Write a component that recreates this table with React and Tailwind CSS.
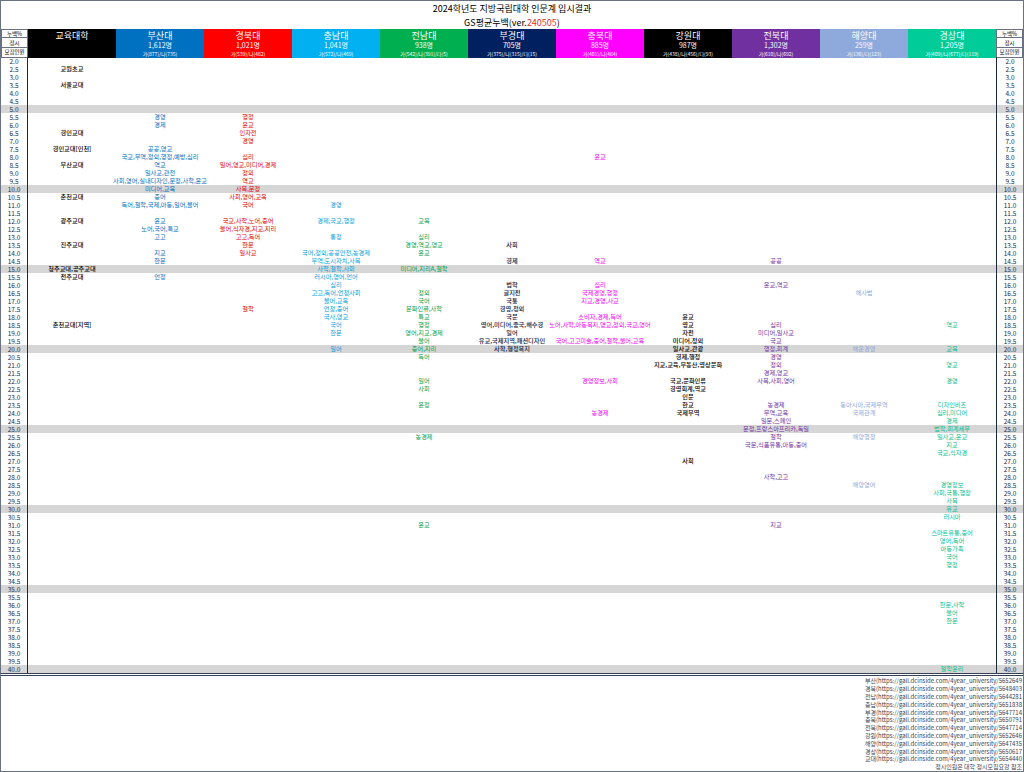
import React from 'react';

const cols = [
    { key: 'edu', name: '교육대학', count: '', sub: '', bg: 'bg-black', fg: 'text-black font-medium' },
    { key: 'pusan', name: '부산대', count: '1,612명', sub: '가(877)/나(735)', bg: 'bg-[#0070c0]', fg: 'text-[#0070c0]' },
    { key: 'knu', name: '경북대', count: '1,021명', sub: '가(539)/나(482)', bg: 'bg-[#ff0000]', fg: 'text-[#e00000]' },
    { key: 'cnu', name: '충남대', count: '1,041명', sub: '가(572)/나(469)', bg: 'bg-[#00b0f0]', fg: 'text-[#00a0e0]' },
    { key: 'jnu', name: '전남대', count: '938명', sub: '가(542)/나(391)/다(5)', bg: 'bg-[#00b050]', fg: 'text-[#00a048]' },
    { key: 'pknu', name: '부경대', count: '705명', sub: '가(375)/나(315)/다(15)', bg: 'bg-[#002060]', fg: 'text-[#101840] font-medium' },
    { key: 'cbnu', name: '충북대', count: '885명', sub: '가(401)/나(484)', bg: 'bg-[#ff00ff]', fg: 'text-[#f000f0]' },
    { key: 'kwnu', name: '강원대', count: '987명', sub: '가(438)/나(456)/다(93)', bg: 'bg-black', fg: 'text-black font-medium' },
    { key: 'jbnu', name: '전북대', count: '1,302명', sub: '가(610)/나(692)', bg: 'bg-[#7030a0]', fg: 'text-[#7030a0]' },
    { key: 'kmou', name: '해양대', count: '259명', sub: '가(136)/다(123)', bg: 'bg-[#8ea9db]', fg: 'text-[#8ea9db]' },
    { key: 'gnu', name: '경상대', count: '1,205명', sub: '가(409)/나(677)/다(119)', bg: 'bg-[#00cc99]', fg: 'text-[#00c090]' },
];

// 누백% -> 학과
const data = {
    edu: {
        '2.5': '교원초교', '3.5': '서울교대', '6.5': '경인교대', '7.5': '경인교대[인천]', '8.5': '부산교대',
        '10.5': '춘천교대', '12.0': '광주교대', '13.5': '진주교대', '15.0': '청주교대,공주교대',
        '15.5': '전주교대', '18.5': '춘천교대[지역]',
    },
    pusan: {
        '5.5': '경영', '6.0': '경제', '7.5': '공공,영교', '8.0': '국교,무역,정외,행정,예방,심리', '8.5': '역교',
        '9.0': '일사교,관전', '9.5': '사회,영어,실내디자인,문정,사학,윤교', '10.0': '미디어,교육', '10.5': '중어',
        '11.0': '독어,철학,국제,아동,일어,불어', '12.0': '윤교', '12.5': '노어,국어,특교', '13.0': '고고',
        '14.0': '지교', '14.5': '한문', '15.5': '언정',
    },
    knu: {
        '5.5': '행정', '6.0': '윤교', '6.5': '인자전', '7.0': '경영', '8.0': '심리', '8.5': '일어,영교,미디어,경제',
        '9.0': '정외', '9.5': '역교', '10.0': '사복,문정', '10.5': '사회,영어,교육', '11.0': '국어',
        '12.0': '국교,사학,노어,중어', '12.5': '불어,식자경,지교,지리', '13.0': '고고,독어', '13.5': '한문',
        '14.0': '일사교', '17.5': '철학',
    },
    cnu: {
        '11.0': '경영', '12.0': '경제,국교,행정', '13.0': '통정', '14.0': '국어,정외,공공안전,농경제',
        '14.5': '무역,도시자치,사복', '15.0': '사학,철학,사회', '15.5': '러시아,영어,언어', '16.0': '심리',
        '16.5': '고고,독어,언정사회', '17.0': '불어,교육', '17.5': '언정,중어', '18.0': '국사,영교', '18.5': '국어',
        '19.0': '한문', '20.0': '일어',
    },
    jnu: {
        '12.0': '교육', '13.0': '심리', '13.5': '경영,역교,영교', '14.0': '윤교', '15.0': '미디어,지리A,철학',
        '16.5': '정외', '17.0': '국어', '17.5': '문화인류,사학', '18.0': '특교', '18.5': '행정',
        '19.0': '영어,지교,경제', '19.5': '불어', '20.0': '중어,지리', '20.5': '독어', '22.0': '일어',
        '22.5': '사회', '23.5': '윤정', '25.5': '농경제', '31.0': '윤교',
    },
    pknu: {
        '13.5': '사회', '14.5': '경제', '16.0': '법학', '16.5': '글지전', '17.0': '국통', '17.5': '경영,정외',
        '18.0': '국문', '18.5': '영어,미디어,중국,해수경', '19.0': '일어', '19.5': '유교,국제지역,패션디자인',
        '20.0': '사학,행정복지',
    },
    cbnu: {
        '8.0': '윤교', '14.5': '역교', '16.0': '심리', '16.5': '국제경영,행정', '17.0': '지교,경영,사교',
        '18.0': '소비자,경제,독어', '18.5': '노어,사학,아동복지,영교,정외,국교,영어',
        '19.5': '국어,고고미술,중어,철학,불어,교육', '22.0': '경영정보,사회', '24.0': '농경제',
    },
    kwnu: {
        '18.0': '윤교', '18.5': '영교', '19.0': '자전', '19.5': '미디어,정외', '20.0': '일사교,관광',
        '20.5': '경제,행정', '21.0': '지교,교육,부동산,영상문화', '22.0': '국교,문화인류', '22.5': '경영회계,역교',
        '23.0': '인문', '23.5': '한교', '24.0': '국제무역', '27.0': '사회',
    },
    jbnu: {
        '14.5': '공공', '16.0': '윤교,역교', '18.5': '심리', '19.0': '미디어,일사교', '19.5': '국교',
        '20.0': '행정,회계', '20.5': '경영', '21.0': '정외', '21.5': '경제,영교', '22.0': '사복,사회,영어',
        '23.5': '농경제', '24.0': '무역,교육', '24.5': '일문,스페인', '25.0': '문정,프랑스아프리카,독일',
        '25.5': '철학', '26.0': '국문,식품유통,아동,중어', '28.0': '사학,고고', '31.0': '지교',
    },
    kmou: {
        '16.5': '해사법', '20.0': '해운경영', '23.5': '동아시아,국제무역', '24.0': '국제관계',
        '25.5': '해양행정', '28.5': '해양영어',
    },
    gnu: {
        '18.5': '역교', '20.0': '교육', '21.0': '영교', '22.0': '경영', '23.5': '디자인비즈', '24.0': '심리,미디어',
        '24.5': '경제', '25.0': '법학,회계세무', '25.5': '일사교,윤교', '26.0': '지교', '26.5': '국교,식자경',
        '28.5': '경영정보', '29.0': '사회,국통,행정', '29.5': '사복', '30.0': '유교', '30.5': '러시아',
        '31.5': '스마트유통,중어', '32.0': '영어,독어', '32.5': '아동가족', '33.0': '국어', '33.5': '행정',
        '36.0': '한문,사학', '36.5': '불어', '37.0': '한문', '40.0': '철학윤리',
    },
};

const links = [
    ['부산', '5652649'], ['경북', '5648403'], ['전남', '5644281'], ['충남', '5651838'],
    ['부경', '5647714'], ['충북', '5650791'], ['전북', '5647714'], ['강원', '5652646'],
    ['해양', '5647435'], ['경상', '5650617'], ['교대', '5654440'],
];

const rows = [];
for (let v = 2; v <= 40; v += 0.5) rows.push(v.toFixed(1));

const font = { fontFamily: '"Noto Sans CJK KR", "Noto Sans", sans-serif' };

const LabelHead = () => (
    <div className="flex flex-col h-full text-[5.5px] text-black bg-white">
        <div className="h-[9px] flex items-center justify-center border border-gray-500">누백%</div>
        <div className="h-[9px] flex items-center justify-center border-x border-gray-500">정시</div>
        <div className="flex-1 flex items-center justify-center border border-gray-500 whitespace-nowrap">모집인원</div>
    </div>
);

const App = () => {
    return (
        <div className="w-[1024px] h-[772px] bg-white border border-gray-500 overflow-hidden flex flex-col" style={font}>
            <div className="h-[15px] flex items-end justify-center text-[9px] text-black">
                2024학년도 지방국립대학 인문계 입시결과
            </div>
            <div className="h-[14px] flex items-center justify-center text-[9px] text-black">
                GS평균누백(ver.<span className="text-[#e03030]">240505</span>)
            </div>

            <div className="grid grid-cols-[27px_repeat(11,88px)_1fr] h-[28px]">
                <LabelHead />
                {cols.map(c => (
                    <div key={c.key} className={`${c.bg} flex flex-col items-center text-white leading-none`}>
                        {c.count ? (
                            <>
                                <div className="text-[9px] mt-[2px]">{c.name}</div>
                                <div className="text-[7px] mt-[2px]">{c.count}</div>
                                <div className="text-[5px] mt-[2px] whitespace-nowrap">{c.sub}</div>
                            </>
                        ) : (
                            <div className="text-[9px] mt-[2px]">{c.name}</div>
                        )}
                    </div>
                ))}
                <LabelHead />
            </div>

            <div className="border-b-[3px] border-double border-gray-700">
                {rows.map(r => {
                    const gray = Number(r) % 5 === 0;
                    return (
                        <div
                            key={r}
                            className={`grid grid-cols-[27px_repeat(11,88px)_1fr] h-[8px] ${gray ? 'bg-[#d6d6d6]' : ''}`}
                        >
                            <div className="border-r border-gray-800 flex items-center justify-center text-[6.5px] text-gray-800 leading-none">
                                {r}
                            </div>
                            {cols.map(c => (
                                <div
                                    key={c.key}
                                    className={`flex items-center justify-center whitespace-nowrap text-[6.2px] leading-none ${c.fg}`}
                                >
                                    {data[c.key][r] || ''}
                                </div>
                            ))}
                            <div className="border-l border-gray-800 flex items-center justify-center text-[6.5px] text-gray-800 leading-none">
                                {r}
                            </div>
                        </div>
                    );
                })}
            </div>

            <div className="flex-1 flex flex-col items-end pr-[1px] text-[6px] text-gray-700 pt-[1px]">
                {links.map(([k, id]) => (
                    <div key={k} className="h-[7.8px] leading-[7.8px] whitespace-nowrap">
                        {k}(https://gall.dcinside.com/4year_university/{id}
                    </div>
                ))}
                <div className="h-[7.8px] leading-[7.8px] whitespace-nowrap">정시인원은 대학 정시모집요강 참조</div>
            </div>
        </div>
    );
};

export default App;
